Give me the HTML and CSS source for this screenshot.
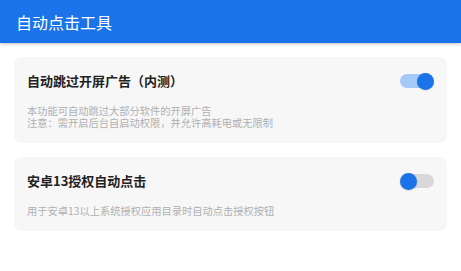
FILE: index.html
```html
<!DOCTYPE html>
<html lang="zh-CN">
<head>
<meta charset="utf-8">
<title>自动点击工具</title>
<link rel="stylesheet" href="styles.css">
</head>
<body>
<header class="appbar">
  <h1 class="appbar-title">自动点击工具</h1>
</header>
<main class="content">
  <section class="card">
    <div class="card-row">
      <h2 class="card-title">自动跳过开屏广告（内测）</h2>
      <span class="switch switch-on"><span class="switch-track"></span><span class="switch-thumb"></span></span>
    </div>
    <p class="card-desc">本功能可自动跳过大部分软件的开屏广告<br>注意：需开启后台自启动权限，并允许高耗电或无限制</p>
  </section>
  <section class="card">
    <div class="card-row">
      <h2 class="card-title">安卓13授权自动点击</h2>
      <span class="switch switch-off"><span class="switch-track"></span><span class="switch-thumb"></span></span>
    </div>
    <p class="card-desc">用于安卓13以上系统授权应用目录时自动点击授权按钮</p>
  </section>
</main>
</body>
</html>
```
FILE: styles.css
```css
* { box-sizing: border-box; }
html, body {
  margin: 0;
  padding: 0;
  background: #ffffff;
  font-family: "Noto Sans CJK SC", "Noto Sans", "Liberation Sans", sans-serif;
}
.appbar {
  height: 43px;
  background: #1a73e8;
  display: flex;
  align-items: center;
  padding: 0 16px;
  box-shadow: 0 1px 3px rgba(0,0,0,0.25);
}
.appbar-title {
  margin: 0;
  font-size: 16px;
  font-weight: 400;
  color: #ffffff;
  line-height: 20px;
}
.content {
  display: flex;
  flex-direction: column;
  gap: 14px;
  padding: 14px 14px 0;
}
.card {
  background: #f7f7f7;
  border-radius: 8px;
  padding: 14px 13px 13.5px 13px;
}
.card-row {
  display: flex;
  align-items: center;
  justify-content: space-between;
  height: 20px;
}
.card-title {
  margin: 0;
  font-size: 13px;
  font-weight: 700;
  color: #222222;
  line-height: 20px;
}
.card-desc {
  margin: 13.5px 0 0;
  font-size: 10.25px;
  line-height: 12.5px;
  color: #b0b0b0;
}
.switch {
  position: relative;
  width: 34px;
  height: 17px;
  display: block;
}
.switch-track {
  position: absolute;
  left: 0;
  top: 1.5px;
  width: 33px;
  height: 14px;
  border-radius: 7px;
}
.switch-thumb {
  position: absolute;
  top: 0;
  width: 17px;
  height: 17px;
  border-radius: 50%;
  background: #1a73e8;
  box-shadow: 0 0.5px 1.5px rgba(0,0,0,0.2);
}
.switch-on .switch-track { background: #a6c9f7; }
.switch-on .switch-thumb { right: 0; }
.switch-off .switch-track { background: #d8d8d8; left: 1px; }
.switch-off .switch-thumb { left: 0; }
```
